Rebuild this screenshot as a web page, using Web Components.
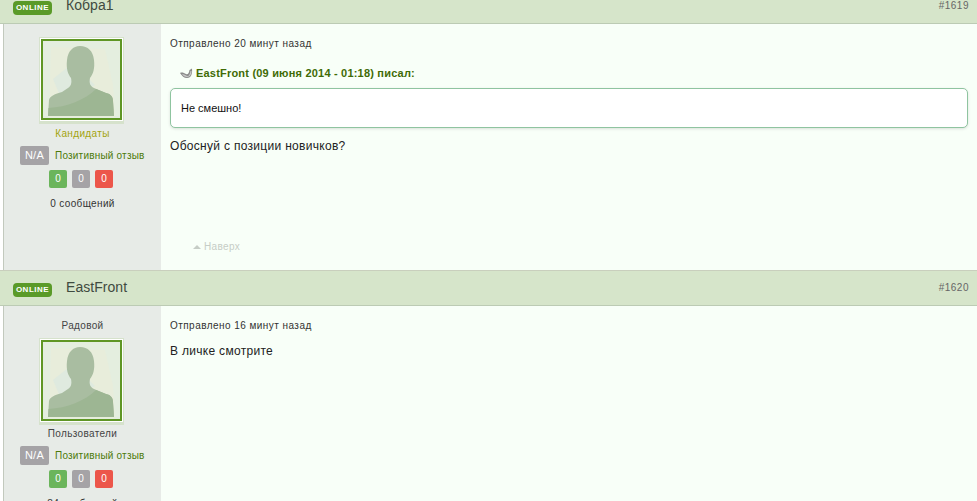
<!DOCTYPE html>
<html>
<head>
<meta charset="utf-8">
<title>Forum</title>
<style>
    html, body { margin: 0; padding: 0; height: 501px; overflow: hidden; background: #fff; }
    forum-post:first-child { margin-top: -11px; }
</style>
</head>
<body>
<forum-post name="Кобра1" num="#1619" time="Отправлено 20 минут назад" group="Кандидаты" group-color="#a3a40f" count="0 сообщений" height="246">
    <forum-quote author="EastFront (09 июня 2014 - 01:18) писал:">Не смешно!</forum-quote>
    <p>Обоснуй с позиции новичков?</p>
</forum-post>
<forum-post name="EastFront" num="#1620" time="Отправлено 16 минут назад" rank="Радовой" group="Пользователи" group-color="#444" count="84 сообщений" height="200">
    <p>В личке смотрите</p>
</forum-post>

<script>
class ForumQuote extends HTMLElement {
    constructor() {
        super();
        this.attachShadow({ mode: "open" });
    }

    connectedCallback() {
        this.shadowRoot.innerHTML = `
            <style>
                :host { display: block; padding-top: 2px; margin-bottom: -1px; font-family: "Liberation Sans", Arial, sans-serif; letter-spacing: 0; }
                .cite {
                    display: flex;
                    align-items: center;
                    gap: 3px;
                    height: 17px;
                    padding-left: 9px;
                    margin-bottom: 7px;
                    font-size: 11px;
                    font-weight: bold;
                    letter-spacing: 0.2px;
                    color: #3f6b06;
                }
                .box {
                    height: 38px;
                    line-height: 38px;
                    padding-left: 10px;
                    background: #fff;
                    border: 1px solid #8fc4a0;
                    border-radius: 5px;
                    box-shadow: 0 1px 3px rgba(0, 0, 0, 0.12);
                    font-size: 11px;
                    color: #111;
                }
            </style>
            <div class="cite">
                <svg width="14" height="12" viewBox="0 0 14 12">
                    <path d="M1 6 C3 5 5 6 7 7 C9 8 10 6 10.500 3 L13 1.500 C13.500 6 12.500 11 8 11 C5 11 3 9 1 6 Z" fill="#8b8b8b"/>
                    <path d="M3 7 C5 7 6 8 8 9 C10 9.500 11 7 11.500 4 L12.500 4 C12.500 7 11 10 8 10 C6 10 4 9 3 7 Z" fill="#c9c9c9"/>
                </svg>
                <span>${this.getAttribute("author")}</span>
            </div>
            <div class="box"><slot></slot></div>
        `;
    }
}

class UserAvatar extends HTMLElement {
    constructor() {
        super();
        this.attachShadow({ mode: "open" });
    }

    connectedCallback() {
        this.shadowRoot.innerHTML = `
            <style>
                :host {
                    display: block;
                    width: 85px;
                    height: 87px;
                    box-sizing: border-box;
                    padding: 1px 1px 3px;
                    background: #d6e2cc;
                }
                .white { background: #fff; padding: 1px; width: 83px; height: 83px; box-sizing: border-box; }
                .green { border: 2px solid #5f9625; height: 81px; box-sizing: border-box; }
                svg { display: block; }
            </style>
            <div class="white"><div class="green">
                <svg width="77" height="77" viewBox="0 0 77 77">
                    <rect width="77" height="77" fill="#e4eedf"/>
                    <path d="M8 6 L62 8 L70 44 L72 76 H6 Z" fill="#e8eddb"/>
                    <path d="M10 38 L30 22 L52 44 L20 62 Z" fill="#dfeadf"/>
                    <path d="M5 75 L6 59 C7 55 12 53 19 51 L25 47 C28 45 29 42 28 37 C25 33 23 28 24 19 C25 10 30 5 37 5 C45 5 50 10 51 19 C52 28 50 33 47 37 C46 42 47 45 51 47 L63 52 C68 53 70 56 70 60 L71 75 Z" fill="#a9bda1"/>
                    <path d="M5 75 L5.500 67 C24 66 42 59 53 48 L63 52 C68 53 70 56 70 60 L71 75 Z" fill="#9db693"/>
                </svg>
            </div></div>
        `;
    }
}

class RepBar extends HTMLElement {
    constructor() {
        super();
        this.attachShadow({ mode: "open" });
    }

    connectedCallback() {
        this.shadowRoot.innerHTML = `
            <style>
                :host { display: block; font-family: "Liberation Sans", Arial, sans-serif; font-size: 10px; letter-spacing: 0.2px; }
                .row { display: flex; align-items: center; }
                .rep { padding-left: 16px; height: 19px; gap: 6px; }
                .na { width: 29px; height: 19px; line-height: 19px; font-size: 11px; letter-spacing: 0.3px; }
                .txt { color: #4d7a0a; white-space: nowrap; }
                .nums { justify-content: center; gap: 5px; margin-top: 5px; padding-right: 3px; }
                .n { width: 18px; height: 18px; line-height: 18px; font-size: 10px; letter-spacing: 0; }
                .na, .n { border-radius: 2px; color: #fff; text-align: center; background: #a5a3a6; }
                .g { background: #6bb55b; }
                .r { background: #ec564a; }
            </style>
            <div class="row rep"><div class="na">N/A</div><div class="txt">Позитивный отзыв</div></div>
            <div class="row nums"><div class="n g">0</div><div class="n">0</div><div class="n r">0</div></div>
        `;
    }
}

class ForumPost extends HTMLElement {
    constructor() {
        super();
        this.attachShadow({ mode: "open" });
    }

    connectedCallback() {
        const rank = this.getAttribute("rank");
        this.shadowRoot.innerHTML = `
            <style>
                :host {
                    display: block;
                    font-family: "Liberation Sans", Arial, sans-serif;
                    color: #333;
                }
                .head {
                    display: flex;
                    align-items: center;
                    height: 35px;
                    box-sizing: border-box;
                    padding: 0 8px 0 13px;
                    background: #d6e5ca;
                    border-bottom: 1px solid #bccbb4;
                }
                .online {
                    width: 39px;
                    height: 14px;
                    line-height: 14px;
                    margin-top: 3px;
                    text-align: center;
                    border-radius: 4px;
                    background: #5a9a28;
                    color: #fff;
                    font-size: 8px;
                    font-weight: bold;
                    letter-spacing: 0.5px;
                }
                .name { margin-left: 14px; margin-top: -2px; font-size: 14px; letter-spacing: 0.05px; color: #3f4a40; }
                .num { margin-left: auto; margin-top: -2px; font-size: 10px; letter-spacing: 0.5px; color: #666; }
                .main { display: flex; height: ${this.getAttribute("height")}px; }
                .side {
                    display: flex;
                    flex-direction: column;
                    align-items: center;
                    width: 157px;
                    margin-left: 3px;
                    border-left: 1px solid #c2c9bd;
                    background: #e7ebe7;
                    font-size: 10px;
                    letter-spacing: 0.35px;
                }
                .rank { margin-top: 13px; height: 13px; line-height: 13px; margin-bottom: 6px; color: #444; }
                user-avatar { margin-top: ${rank ? "0" : "13px"}; margin-left: -2px; }
                .group { margin-top: ${rank ? "2px" : "3px"}; height: 13px; line-height: 13px; }
                rep-bar { align-self: stretch; margin-top: 6px; }
                .count { margin-top: 9px; height: 13px; line-height: 13px; color: #333; }
                .content { flex: 1; background: #f8fff8; padding: 13px 9px 0; position: relative; }
                .time { height: 13px; line-height: 13px; font-size: 10px; letter-spacing: 0.45px; color: #333; margin-bottom: 12px; }
                .body { font-size: 12px; letter-spacing: 0.3px; color: #222; }
                ::slotted(p) { margin: 12px 0 0; line-height: 14px; }
                .top {
                    position: absolute;
                    left: 32px;
                    top: 217px;
                    display: ${rank ? "none" : "flex"};
                    align-items: center;
                    gap: 3px;
                    font-size: 10px;
                    letter-spacing: 0.35px;
                    color: #c6cdc6;
                }
                .top i { width: 0; height: 0; border: 4px solid transparent; border-top: 0; border-bottom: 4px solid #c6cdc6; }
                .sep { height: 1px; background: #c9cfbd; }
            </style>
            <div class="head">
                <div class="online">ONLINE</div>
                <div class="name">${this.getAttribute("name")}</div>
                <div class="num">${this.getAttribute("num")}</div>
            </div>
            <div class="main">
                <div class="side">
                    ${rank ? `<div class="rank">${rank}</div>` : ""}
                    <user-avatar></user-avatar>
                    <div class="group" style="color:${this.getAttribute("group-color")}">${this.getAttribute("group")}</div>
                    <rep-bar></rep-bar>
                    <div class="count">${this.getAttribute("count")}</div>
                </div>
                <div class="content">
                    <div class="time">${this.getAttribute("time")}</div>
                    <div class="body"><slot></slot></div>
                    <div class="top"><i></i>Наверх</div>
                </div>
            </div>
            <div class="sep"></div>
        `;
    }
}

customElements.define("forum-quote", ForumQuote);
customElements.define("user-avatar", UserAvatar);
customElements.define("rep-bar", RepBar);
customElements.define("forum-post", ForumPost);
</script>
</body>
</html>
